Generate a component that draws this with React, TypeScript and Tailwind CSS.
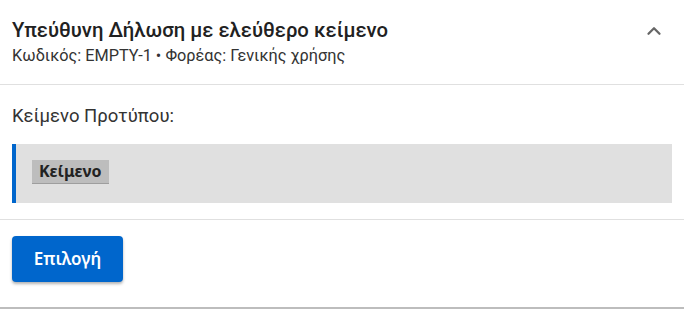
import { ChevronUp } from 'lucide-react'

export default function App() {
  return (
    <div className="w-[684px] h-[309px] bg-white font-['Roboto',sans-serif] text-[#212121] border-b-2 border-[#bdbdbd]">
      {/* header */}
      <div className="flex items-start justify-between px-3 pt-[17px] h-[85px] border-b border-[#e0e0e0]">
        <div>
          <h2 className="text-[20.3px] leading-[26px] font-medium">Υπεύθυνη Δήλωση με ελεύθερο κείμενο</h2>
          <p className="text-[16.3px] leading-[20px] mt-[3px] text-[#333]">
            Κωδικός: EMPTY-1 • Φορέας: Γενικής χρήσης
          </p>
        </div>
        <ChevronUp className="w-[22px] h-[22px] mt-[3px] mr-[7px] text-[#666]" strokeWidth={2.5} />
      </div>

      {/* body */}
      <div className="px-3 pt-[20px] pb-[16px] border-b border-[#e0e0e0]">
        <p className="text-[18.5px] leading-[22px] text-[#333]">Κείμενο Προτύπου:</p>
        <div className="mt-[17px] h-[59px] bg-[#e0e0e0] border-l-4 border-[#0066cc] pl-4 pt-4">
          <span className="inline-block h-[24px] pl-[7px] pr-[8px] bg-[#bdbdbd] border-b border-[#9e9e9e] font-['Noto_Sans',sans-serif] font-bold text-[16px] leading-[23px] text-[#222]">
            Κείμενο
          </span>
        </div>
      </div>

      {/* actions */}
      <div className="px-3 pt-[16px]">
        <button className="w-[111px] h-[46px] rounded-[4px] bg-[#0066cc] text-white font-['Noto_Sans',sans-serif] font-semibold text-[17px] shadow-[0_2px_3px_rgba(0,0,0,0.3)]">
          Επιλογή
        </button>
      </div>
    </div>
  )
}
